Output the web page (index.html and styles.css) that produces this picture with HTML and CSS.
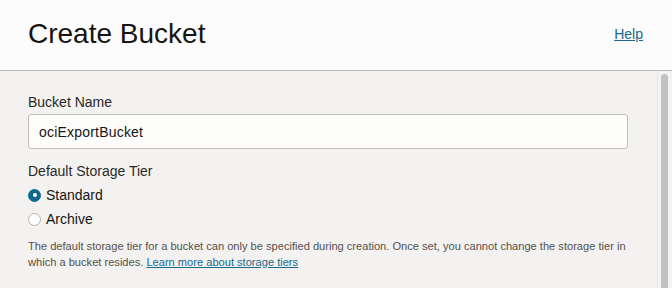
FILE: index.html
```html
<!DOCTYPE html>
<html lang="en">
<head>
  <meta charset="UTF-8" />
  <title>Create Bucket</title>
  <link rel="stylesheet" href="styles.css">
</head>
<body>
  <div class="header">
    <h1>Create Bucket</h1>
    <a href="#" class="help-link">Help</a>
  </div>

  <div class="main">
    <div class="content">
      <label class="field-label" for="bucket-name">Bucket Name</label>
      <input type="text" id="bucket-name" value="ociExportBucket" />

      <div class="field-label tier-label">Default Storage Tier</div>
      <label class="radio-row">
        <span class="radio checked"></span>
        <span>Standard</span>
      </label>
      <label class="radio-row">
        <span class="radio"></span>
        <span>Archive</span>
      </label>

      <p class="hint">
        The default storage tier for a bucket can only be specified during creation. Once set, you cannot change the storage tier in which a bucket resides.
        <a href="#">Learn more about storage tiers</a>
      </p>
    </div>
    <div class="scrollbar">
      <div class="thumb"></div>
    </div>
  </div>
</body>
</html>
```

FILE: styles.css
```css
* { box-sizing: border-box; }
html, body {
  margin: 0;
  height: 100%;
}
body {
  font-family: 'Liberation Sans', Arial, sans-serif;
  background-color: #f3f2f0;
  color: #2b2926;
  overflow: hidden;
}

.header {
  display: flex;
  align-items: center;
  justify-content: space-between;
  height: 71px;
  padding: 0 29px 0 28px;
  background-color: #fcfcfc;
  border-bottom: 1px solid #bdb8b2;
}
.header h1 {
  margin: 0 0 2px;
  font-size: 28px;
  font-weight: 400;
  color: #161513;
}
.help-link {
  font-size: 14px;
  color: #17698d;
  margin-bottom: 2px;
}

.main {
  display: flex;
  height: calc(100% - 71px);
}
.content {
  flex: 1;
  padding: 23px 29px 0 28px;
}

.field-label {
  display: block;
  font-size: 14px;
  line-height: 17px;
  color: #2b2926;
}
input[type="text"] {
  display: block;
  width: 100%;
  height: 35px;
  margin-top: 3px;
  padding: 0 10px;
  font-family: inherit;
  font-size: 14px;
  letter-spacing: 0.2px;
  color: #161513;
  background: #fdfdfc;
  border: 1px solid #c4bdb6;
  border-radius: 3px;
}
.tier-label {
  margin-top: 14px;
  margin-bottom: 3px;
}

.radio-row {
  display: flex;
  align-items: center;
  gap: 5px;
  height: 24px;
  font-size: 14px;
  color: #161513;
}
.radio {
  width: 13px;
  height: 13px;
  border-radius: 50%;
  background: #fff;
  border: 1px solid #b5b0ab;
}
.radio.checked {
  background: #0f6a8d;
  border-color: #0f6a8d;
  position: relative;
}
.radio.checked::after {
  content: "";
  position: absolute;
  left: 3.5px;
  top: 3.5px;
  width: 4px;
  height: 4px;
  border-radius: 50%;
  background: #fff;
}

.hint {
  margin: 7px 0 0;
  font-size: 11.1px;
  line-height: 16px;
  color: #55514c;
}
.hint a {
  color: #17698d;
}

.scrollbar {
  width: 15px;
  padding: 3px 4px 0 3px;
  border-left: 1px solid #e6e5e3;
}
.thumb {
  height: 100%;
  background: #c1c1c1;
  border-radius: 4px 4px 0 0;
}
```
